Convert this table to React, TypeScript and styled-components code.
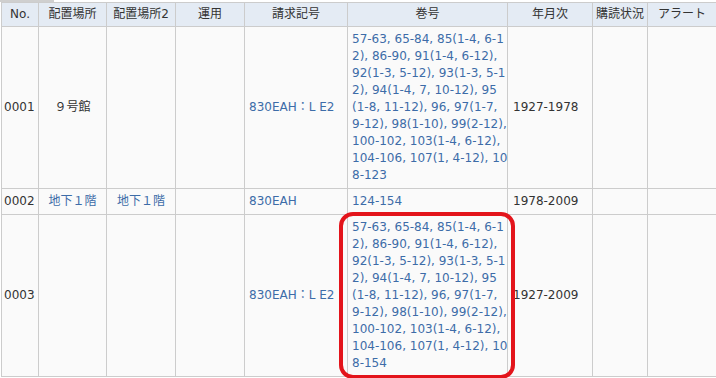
import styled, { createGlobalStyle } from "styled-components";

const GlobalStyle = createGlobalStyle`
  body {
    margin: 0;
    background: #ffffff;
    font-family: "DejaVu Sans", "Noto Sans CJK JP", sans-serif;
    font-size: 12px;
    color: #333333;
  }
`;

const widths = [37, 68, 69, 69, 103, 160, 85, 55, 69];

const headers = ["No.", "配置場所", "配置場所2", "運用", "請求記号", "巻号", "年月次", "購読状況", "アラート"];

const volumeLines = (last: string) => [
  "57-63, 65-84, 85(1-4, 6-1",
  "2), 86-90, 91(1-4, 6-12),",
  "92(1-3, 5-12), 93(1-3, 5-1",
  "2), 94(1-4, 7, 10-12), 95",
  "(1-8, 11-12), 96, 97(1-7,",
  "9-12), 98(1-10), 99(2-12),",
  "100-102, 103(1-4, 6-12),",
  "104-106, 107(1, 4-12), 10",
  last,
];

type Row = {
  no: string;
  place: string;
  placeLink: boolean;
  place2: string;
  callNo: string;
  volumes: string[];
  years: string;
  marked?: boolean;
};

const rows: Row[] = [
  {
    no: "0001",
    place: "９号館",
    placeLink: false,
    place2: "",
    callNo: "830EAH：L E2",
    volumes: volumeLines("8-123"),
    years: "1927-1978",
  },
  {
    no: "0002",
    place: "地下１階",
    placeLink: true,
    place2: "地下１階",
    callNo: "830EAH",
    volumes: ["124-154"],
    years: "1978-2009",
  },
  {
    no: "0003",
    place: "",
    placeLink: false,
    place2: "",
    callNo: "830EAH：L E2",
    volumes: volumeLines("8-154"),
    years: "1927-2009",
    marked: true,
  },
];

const App = () => {
  return (
    <>
      <GlobalStyle />
      <Page>
        <TopTab />
        <Table>
          <colgroup>
            {widths.map((w, i) => (
              <col key={i} style={{ width: w }} />
            ))}
          </colgroup>
          <thead>
            <tr>
              {headers.map((h) => (
                <Th key={h}>{h}</Th>
              ))}
            </tr>
          </thead>
          <tbody>
            {rows.map((r) => (
              <tr key={r.no}>
                <Td $pad="0 2px">{r.no}</Td>
                <Td $align="center">{r.placeLink ? <Link>{r.place}</Link> : r.place}</Td>
                <Td $align="center">{r.place2 && <Link>{r.place2}</Link>}</Td>
                <Td />
                <Td>
                  <Link>{r.callNo}</Link>
                </Td>
                <VolumeCell>
                  {r.volumes.map((line, i) => (
                    <VolumeLine key={i}>{line}</VolumeLine>
                  ))}
                  {r.marked && <Highlight />}
                </VolumeCell>
                <Td $pad="4px 5px">{r.years}</Td>
                <Td />
                <Td />
              </tr>
            ))}
          </tbody>
        </Table>
      </Page>
    </>
  );
};

export default App;

const Page = styled.div`
  width: 716px;
  height: 378px;
  overflow: hidden;
  position: relative;
`;

const TopTab = styled.div`
  width: 54px;
  height: 2px;
  background: #cfcfcf;
`;

const Table = styled.table`
  table-layout: fixed;
  border-collapse: collapse;
  width: 715px;
  margin-left: 1px;
  line-height: 17px;
`;

const Th = styled.th`
  background: #e4ebf4;
  border: 1px solid #cccccc;
  padding: 3px 2px;
  font-weight: normal;
  text-align: center;
  color: #333333;
  white-space: nowrap;
  overflow: hidden;
`;

const Td = styled.td<{ $align?: string; $pad?: string }>`
  background: #fafafa;
  border: 1px solid #cccccc;
  padding: ${(p) => p.$pad || "4px 4px"};
  text-align: ${(p) => p.$align || "left"};
  vertical-align: middle;
  white-space: nowrap;
`;

const VolumeCell = styled(Td)`
  position: relative;
`;

const VolumeLine = styled.div`
  color: #3d6ca8;
  white-space: pre;
`;

const Link = styled.span`
  color: #3d6ca8;
`;

const Highlight = styled.div`
  position: absolute;
  left: -9px;
  right: -8px;
  top: -3px;
  bottom: -3px;
  border: 4px solid #e3141b;
  border-radius: 14px;
  pointer-events: none;
`;
